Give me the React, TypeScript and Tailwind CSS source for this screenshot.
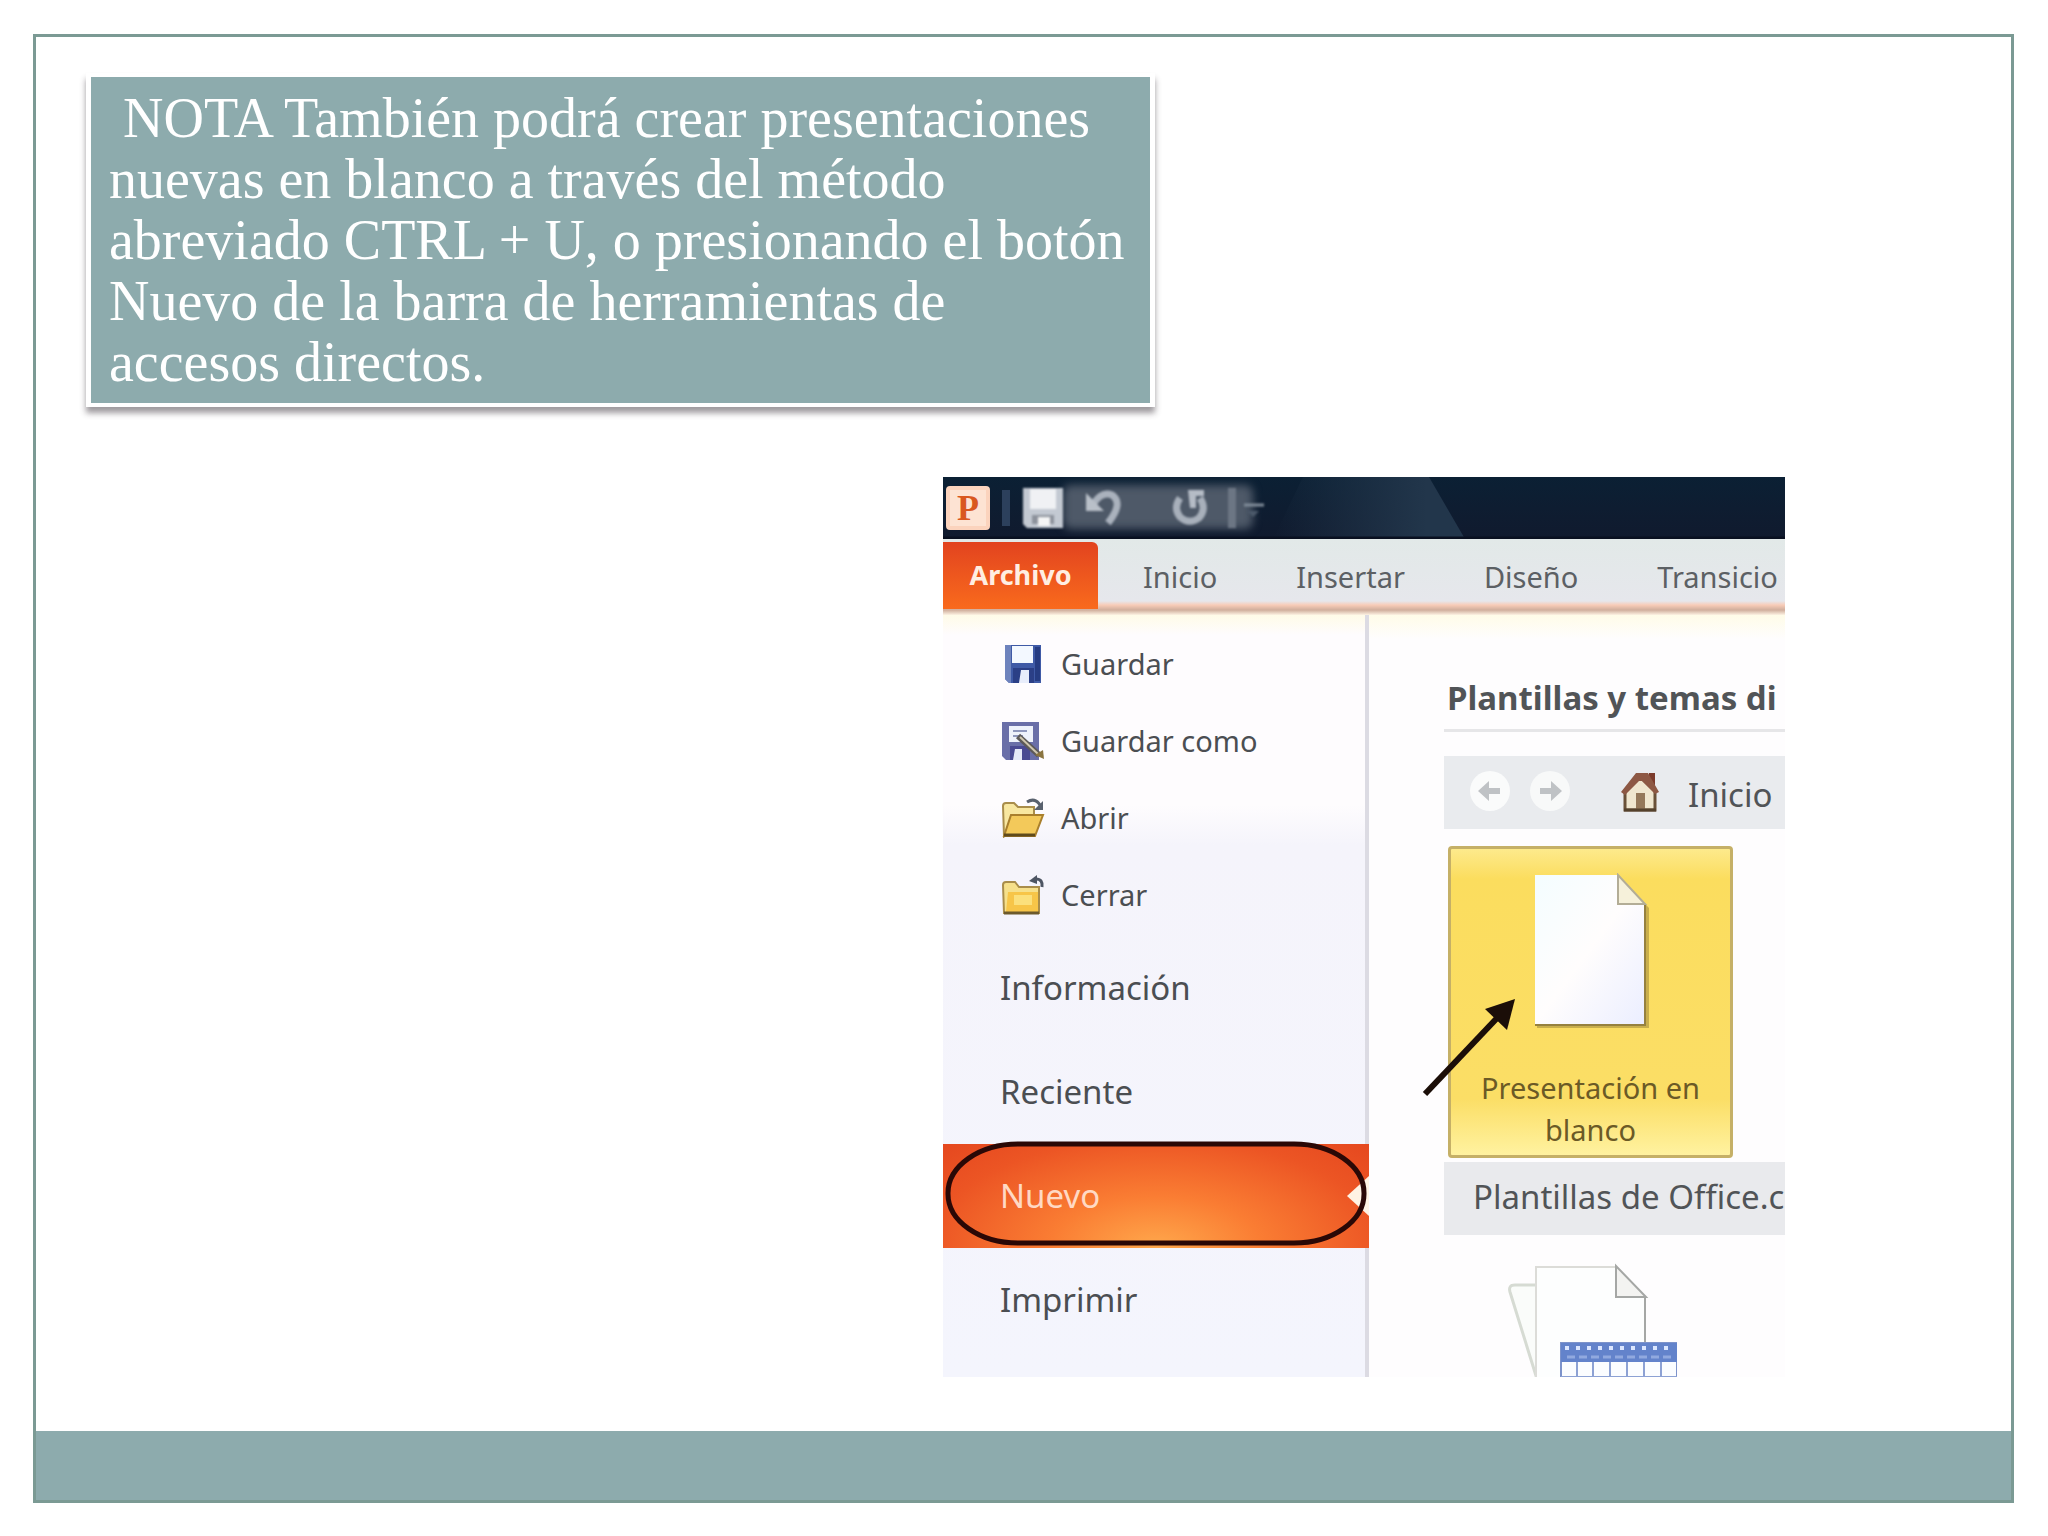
import type { ReactNode } from "react";

const noteLines = [
  "\u00a0NOTA También podrá crear presentaciones",
  "nuevas en blanco a través del método",
  "abreviado CTRL + U, o presionando el botón",
  "Nuevo de la barra de herramientas de",
  "accesos directos.",
];

const tabs = ["Inicio", "Insertar", "Diseño", "Transicio"];

const SaveIcon = () => (
  <svg viewBox="0 0 44 40" className="h-10 w-11" aria-hidden="true">
    <path d="M4 1h36v38H8l-4-4z" fill="#3f5aa6" />
    <path d="M4 1h6v38H8l-4-4z" fill="#6e83bd" />
    <path d="M34 3h5v34h-5z" fill="#263c82" />
    <path d="M11 2h21v17H11z" fill="#f3f8ff" />
    <path d="M12 24h21v15H12z" fill="#2b3f86" />
    <path d="M20 26h8v13h-10z" fill="#e8edfb" />
  </svg>
);

const SaveAsIcon = () => (
  <svg viewBox="0 0 44 40" className="h-10 w-11" aria-hidden="true">
    <path d="M1 1h37v38H5l-4-4z" fill="#6a6fa8" />
    <path d="M8 5h24v16H8z" fill="#eef2fb" />
    <path d="M12 10h14M12 15h10" stroke="#8f98bd" strokeWidth="2" />
    <path d="M9 25h20v14H9z" fill="#4a4a92" />
    <path d="M14 28h7v11h-9z" fill="#e6e9f7" />
    <path d="M17 15l21 19" stroke="#5d5a58" strokeWidth="6" />
    <path d="M19 16l18 17" stroke="#cfc7ae" strokeWidth="2" />
    <path d="M34 34l8-5 1 9z" fill="#8a7440" />
  </svg>
);

const OpenIcon = () => (
  <svg viewBox="0 0 44 40" className="h-10 w-11" aria-hidden="true">
    <path d="M2 8q0-3 3-3h8l4 4h16v8H14L3 38z" fill="#f8e7a0" stroke="#a98d4b" strokeWidth="2" />
    <path d="M10 17h32l-8 21H3z" fill="#f3c95a" stroke="#a97f2c" strokeWidth="2" />
    <path d="M3 37h31" stroke="#5f4a1c" strokeWidth="3" />
    <path d="M26 4q8-5 13 3" fill="none" stroke="#59616e" strokeWidth="3" />
    <path d="M42 3v9h-9z" fill="#59616e" />
  </svg>
);

const CloseIcon = () => (
  <svg viewBox="0 0 44 40" className="h-10 w-11" aria-hidden="true">
    <path d="M2 10q0-3 3-3h9l4 5h20v26H3z" fill="#f6e08b" stroke="#a98d4b" strokeWidth="2" />
    <path d="M7 17h30v20H5z" fill="#f7c548" />
    <path d="M13 20h18v10H13z" fill="#fbe07c" />
    <path d="M3 38h35" stroke="#6d5a2c" strokeWidth="3" />
    <path d="M41 12q1-8-6-8" fill="none" stroke="#4d5563" strokeWidth="3" />
    <path d="M36 0v9l-8-3z" fill="#4d5563" />
  </svg>
);

const HomeIcon = () => (
  <svg viewBox="0 0 40 42" className="h-[42px] w-10" aria-hidden="true">
    <path d="M29 3h6v14h-6z" fill="#7c3b2c" />
    <path d="M5 21L20 7l15 14v19H5z" fill="#efe6cf" stroke="#6a5138" strokeWidth="3" />
    <path d="M1 22L16 3h12l11 19-4 2-13-13h-3L5 25z" fill="#8d5844" />
    <path d="M16 23h9v17h-9z" fill="#94785a" />
    <path d="M4 40h32" stroke="#54412c" strokeWidth="3" />
  </svg>
);

const BlankPage = () => (
  <svg viewBox="0 0 116 156" className="h-[156px] w-[116px]" aria-hidden="true">
    <defs>
      <linearGradient id="sheet" x1="0" y1="0" x2="1" y2="1">
        <stop offset="0" stopColor="#f4fdff" />
        <stop offset="0.5" stopColor="#fffdfd" />
        <stop offset="1" stopColor="#ebeeff" />
      </linearGradient>
    </defs>
    <path d="M4 5h83l29 30v120H4z" fill="#a98f3e" opacity="0.6" />
    <path d="M2 2h83l27 29v120H2z" fill="url(#sheet)" />
    <path d="M85 2v29h27z" fill="#f6f1da" stroke="#b3ad96" strokeWidth="2" />
    <path d="M2 152h110V32" fill="none" stroke="#96813f" strokeWidth="2" />
  </svg>
);

const CalendarPages = () => (
  <svg viewBox="0 0 176 118" className="h-[118px] w-44" aria-hidden="true">
    <path d="M36 24H14q-7 0-5 7l27 87" fill="#fafcfa" stroke="#d6dbd3" strokeWidth="3" />
    <path d="M35 6h80l29 30v82H35z" fill="#fdfefe" stroke="#dcdcd8" strokeWidth="2" />
    <path d="M115 5v31h30z" fill="#f3f3f1" stroke="#a5a7a5" strokeWidth="2" />
    <path d="M144 36v50" stroke="#a5a7a5" strokeWidth="2" />
    <path d="M60 82h116v36H60z" fill="#fbfdff" stroke="#7d93cb" strokeWidth="2" />
    <path d="M60 82h116v19H60z" fill="#6383cb" />
    <path d="M64 87h108" stroke="#dbe6ff" strokeWidth="4" strokeDasharray="4 7" />
    <path d="M66 96h106" stroke="#91a9df" strokeWidth="3" strokeDasharray="8 4" />
    <path d="M76 101v17M92 101v17M109 101v17M126 101v17M143 101v17M160 101v17M60 116h116" stroke="#8da2d4" strokeWidth="2" />
  </svg>
);

const NavArrow = ({ flip = false }: { flip?: boolean }) => (
  <svg viewBox="0 0 28 24" className={flip ? "h-6 w-7 rotate-180" : "h-6 w-7"} aria-hidden="true">
    <path d="M2 12L13 2v7h11v6H13v7z" fill="#bfc2c5" />
  </svg>
);

const fileActions: { label: string; icon: ReactNode }[] = [
  { label: "Guardar", icon: <SaveIcon /> },
  { label: "Guardar como", icon: <SaveAsIcon /> },
  { label: "Abrir", icon: <OpenIcon /> },
  { label: "Cerrar", icon: <CloseIcon /> },
];

const QuickAccess = () => (
  <div className="relative flex h-[62px] items-center overflow-hidden bg-linear-to-b from-[#0b2034] to-[#101a2e]">
    <svg viewBox="0 0 842 62" className="absolute inset-0 h-full w-full" preserveAspectRatio="none" aria-hidden="true">
      <defs>
        <linearGradient id="beam" x1="0" x2="1">
          <stop offset="0" stopColor="#22364b" stopOpacity="0" />
          <stop offset="0.8" stopColor="#22364b" />
        </linearGradient>
      </defs>
      <path d="M360 0h126l36 62H330z" fill="url(#beam)" />
      <path d="M0 61h842" stroke="#091020" strokeWidth="3" />
    </svg>
    <div className="absolute top-2 left-[120px] h-11 w-[190px] rounded-lg bg-[#4e5968] blur-[4px]" />
    <div className="relative ml-[3px] flex h-11 w-11 items-center justify-center rounded-sm border-4 border-[#fbd3bd] bg-[#fde3d3] font-['Liberation_Serif',serif] text-4xl leading-none font-bold text-[#d9581f]">
      P
    </div>
    <div className="relative ml-3 h-9 w-2 bg-[#2c405c]" />
    <button type="button" aria-label="Guardar" className="relative ml-3 blur-[1px]">
      <svg viewBox="0 0 42 42" className="h-[42px] w-[42px]" aria-hidden="true">
        <path d="M1 1h40v40H5l-4-4z" fill="#c3c9d2" />
        <path d="M8 2h26v20H8z" fill="#f0f1f4" />
        <path d="M10 28h22v9H10z" fill="#8d929c" />
        <path d="M16 30h12v9H16z" fill="#f5f5f5" />
      </svg>
    </button>
    <button type="button" aria-label="Deshacer" className="relative ml-5 blur-[1px]">
      <svg viewBox="0 0 42 42" className="h-[42px] w-[42px]" aria-hidden="true">
        <path d="M10 16q8-12 18-8 12 8-4 28" fill="none" stroke="#aab2bd" strokeWidth="7" />
        <path d="M2 6v18h18z" fill="#b9c0c9" />
      </svg>
    </button>
    <button type="button" aria-label="Rehacer" className="relative ml-11 blur-[1px]">
      <svg viewBox="0 0 42 42" className="h-[42px] w-[42px]" aria-hidden="true">
        <path d="M10 11q-7 10 0 19 9 8 19 1 8-9 1-20" fill="none" stroke="#a8b0bb" strokeWidth="7" />
        <path d="M18 3h16v6h-8v12h-6z" fill="#b5bcc6" />
      </svg>
    </button>
    <div className="relative ml-4 h-10 w-2 bg-[#6c7684] blur-[1px]" />
    <svg viewBox="0 0 20 20" className="relative ml-2 h-5 w-5 blur-[1px]" aria-hidden="true">
      <path d="M0 7h20" stroke="#808c99" strokeWidth="3" />
      <path d="M3 13h12l-6 6z" fill="#4c5a6b" />
    </svg>
  </div>
);

const Ribbon = () => (
  <nav className="flex h-[76px] items-center bg-[linear-gradient(to_bottom,#e2e9e8_0,#e6e7ec_62px,#f8ccb8_66px,#d0ae9c_71px,#fdf3e4_76px)] text-[29px] whitespace-nowrap text-[#5c6064]">
    <button
      type="button"
      className="mt-[3px] h-[67px] w-[155px] shrink-0 self-start rounded-tr-md bg-linear-to-b from-[#e2431f] to-[#f96a1c] text-[27px] font-bold text-[#ffeee2]"
    >
      Archivo
    </button>
    <div className="ml-[45px] flex gap-[79px]">
      {tabs.map((tab) => (
        <button key={tab} type="button">
          {tab}
        </button>
      ))}
    </div>
  </nav>
);

const Sidebar = () => (
  <aside className="flex w-[426px] shrink-0 flex-col border-r-4 border-[#dcdbe3] bg-[linear-gradient(to_bottom,#fffbe8_0,#fefcfe_20px,#fefcfe_190px,#f5f4fb_230px,#f4f5fd_100%)] pt-[10px] text-[#4b4e52]">
    {fileActions.map((action) => (
      <button
        key={action.label}
        type="button"
        className="flex h-[77px] items-center gap-4 pl-[58px] text-[29px]"
      >
        {action.icon}
        {action.label}
      </button>
    ))}
    <div className="flex flex-col pt-[3px] text-left text-[33px]">
      <button type="button" className="h-[104px] pl-[57px] text-left">
        Información
      </button>
      <button type="button" className="h-[104px] pl-[57px] text-left">
        Reciente
      </button>
      <div className="relative -mr-1">
        <button
          type="button"
          className="h-[104px] w-full bg-[radial-gradient(ellipse_at_50%_100%,#ffa84c_0%,#fa7d33_35%,#ec5524_75%,#e5481f_100%)] pl-[57px] text-left text-[#ffd9c4]"
        >
          Nuevo
        </button>
        <svg viewBox="0 0 426 112" className="absolute -top-1 left-0 h-28 w-[426px]" aria-hidden="true">
          <path d="M404 56l22-20v40z" fill="#fff3e4" />
          <rect x="5" y="4" width="416" height="99" rx="70" ry="49" fill="none" stroke="#2a0806" strokeWidth="5" />
        </svg>
      </div>
      <button type="button" className="h-[104px] pl-[57px] text-left">
        Imprimir
      </button>
    </div>
  </aside>
);

const Templates = () => (
  <section className="min-w-0 flex-1 overflow-hidden bg-[linear-gradient(to_bottom,#fffce8_0,#fefdfe_24px)] pl-[75px] whitespace-nowrap text-[#515457]">
    <h2 className="flex h-[117px] items-center border-b-3 border-[#e6e6e8] pt-[52px] pl-[3px] text-[33px] font-bold">
      Plantillas y temas di
    </h2>
    <div className="mt-6 flex h-[73px] items-center bg-[#e9ebee] pb-1 pl-[26px] text-[33px]">
      <button type="button" aria-label="Atrás" className="flex h-10 w-10 items-center justify-center rounded-full bg-[#fafbfb]">
        <NavArrow />
      </button>
      <button type="button" aria-label="Adelante" className="ml-5 flex h-10 w-10 items-center justify-center rounded-full bg-[#f8f9f9]">
        <NavArrow flip />
      </button>
      <span className="ml-[50px]">
        <HomeIcon />
      </span>
      <span className="ml-7 pt-2">Inicio</span>
    </div>
    <div className="relative mt-[17px] ml-1 w-[285px]">
      <button
        type="button"
        className="flex h-[312px] w-full flex-col items-center rounded-sm border-3 border-[#c5b067] bg-[linear-gradient(to_bottom,#fdea8c_0,#fbdd5e_30px,#fbde66_250px,#fff2a0_100%)] pt-6 text-[29px] leading-[42px] text-[#6b5a26]"
      >
        <BlankPage />
        <span className="mt-[38px]">
          Presentación en
          <br />
          blanco
        </span>
      </button>
      <svg viewBox="0 0 100 104" className="absolute top-[150px] -left-[27px] h-[104px] w-[100px]" aria-hidden="true">
        <path d="M4 98l74-78" stroke="#1b0e08" strokeWidth="6" />
        <path d="M94 3L86 34 64 13z" fill="#1b0e08" />
      </svg>
    </div>
    <div className="mt-1 flex h-[73px] items-center bg-[#e9eaed] pb-1 pl-[29px] text-[33px]">
      Plantillas de Office.c
    </div>
    <div className="mt-[26px] ml-[57px]">
      <CalendarPages />
    </div>
  </section>
);

const App = () => {
  return (
    <div className="flex min-h-screen flex-col bg-white pt-[34px] pr-[34px] pb-[33px] pl-[33px]">
      <main className="flex flex-1 flex-col border-3 border-[#7b9a94] bg-white">
        <div className="flex flex-1 flex-col items-start pt-9 pl-[50px]">
          <p className="max-w-full border-x-5 border-y-4 border-white bg-[#8dabad] pt-[11px] pr-[24px] pb-[10px] pl-[18px] font-['Liberation_Serif',serif] text-[56px] leading-[61px] text-white shadow-[0_6px_6px_rgba(40,30,40,0.45)] lg:w-[1069px]">
            {noteLines.map((line) => (
              <span key={line} className="block whitespace-nowrap">
                {line}
              </span>
            ))}
          </p>
          <figure className="mt-[70px] mr-[226px] h-[900px] w-[842px] max-w-full self-end overflow-hidden font-['Noto_Sans','Open_Sans',sans-serif]">
            <QuickAccess />
            <Ribbon />
            <div className="flex h-[762px] overflow-hidden">
              <Sidebar />
              <Templates />
            </div>
          </figure>
        </div>
        <footer className="h-[69px] bg-[#8dabad]" />
      </main>
    </div>
  );
};

export default App;
